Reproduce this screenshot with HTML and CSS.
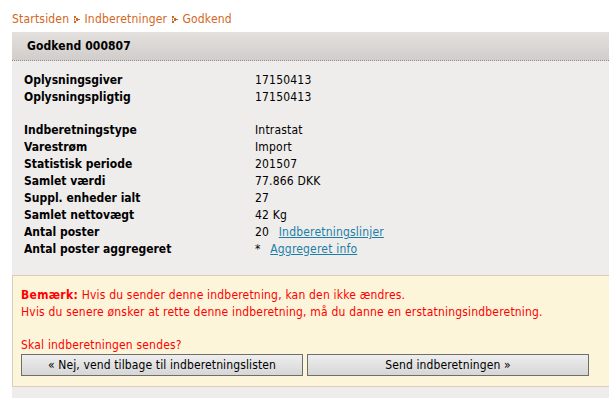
FILE: index.html
```html
<!DOCTYPE html>
<html lang="da">
<head>
    <meta charset="UTF-8">
    <title>Godkend 000807</title>
    <link rel="stylesheet" href="styles.css">
</head>
<body>
<div class="crumbs">
    <a href="#">Startsiden</a>
    <svg class="sep" width="6" height="7" viewBox="0 0 6 7"><rect x="0" y="0" width="2" height="2"/><rect x="0" y="5" width="2" height="2"/><rect x="2" y="2" width="2" height="3"/><rect x="4" y="3" width="2" height="1"/><rect x="0" y="2.5" width="1" height="2"/></svg>
    <a href="#">Indberetninger</a>
    <svg class="sep" width="6" height="7" viewBox="0 0 6 7"><rect x="0" y="0" width="2" height="2"/><rect x="0" y="5" width="2" height="2"/><rect x="2" y="2" width="2" height="3"/><rect x="4" y="3" width="2" height="1"/><rect x="0" y="2.5" width="1" height="2"/></svg>
    <a href="#">Godkend</a>
</div>

<div class="panel">
    <div class="panel-head">Godkend 000807</div>
    <div class="panel-body">
        <dl class="facts">
            <dt>Oplysningsgiver</dt><dd>17150413</dd>
            <dt>Oplysningspligtig</dt><dd>17150413</dd>
            <dt class="gap"></dt><dd class="gap"></dd>
            <dt>Indberetningstype</dt><dd>Intrastat</dd>
            <dt>Varestrøm</dt><dd>Import</dd>
            <dt>Statistisk periode</dt><dd>201507</dd>
            <dt>Samlet værdi</dt><dd>77.866 DKK</dd>
            <dt>Suppl. enheder ialt</dt><dd>27</dd>
            <dt>Samlet nettovægt</dt><dd>42 Kg</dd>
            <dt>Antal poster</dt><dd>20 <a href="#" class="lnk">Indberetningslinjer</a></dd>
            <dt>Antal poster aggregeret</dt><dd>* <a href="#" class="lnk">Aggregeret info</a></dd>
        </dl>

        <div class="notice">
            <p><b>Bemærk:</b> Hvis du sender denne indberetning, kan den ikke ændres.<br>
            Hvis du senere ønsker at rette denne indberetning, må du danne en erstatningsindberetning.</p>
            <p class="ask">Skal indberetningen sendes?</p>
            <div class="btns">
                <button class="btn back">« Nej, vend tilbage til indberetningslisten</button>
                <button class="btn send">Send indberetningen »</button>
            </div>
        </div>
    </div>
</div>
</body>
</html>
```

FILE: styles.css
```css
*{
    margin: 0;
    padding: 0;
}

html, body{
    overflow: hidden;
}

body{
    background: #ffffff;
    font-family: "DejaVu Sans Condensed", "DejaVu Sans", sans-serif;
    font-size: 12px;
    letter-spacing: 0.19px;
    color: #000000;
    padding-left: 12px;
}

.crumbs{
    height: 32px;
    line-height: 39px;
    color: #d4661c;
}
.crumbs a{
    color: #d4661c;
    text-decoration: none;
}
.crumbs .sep{
    fill: #d4661c;
    margin: 0 1px;
    vertical-align: 0;
}

.panel{
    margin-right: -20px;
    background: #efedeb;
    padding-bottom: 11px;
}
.panel-head{
    height: 28px;
    line-height: 28px;
    padding-left: 15px;
    font-size: 12px;
    font-weight: bold;
    letter-spacing: 0.1px;
    background: linear-gradient(#e3e0dd, #d1cdca);
    border-bottom: 1px dotted #8a8a8a;
}
.panel-body{
    padding-top: 11px;
}

.facts{
    display: grid;
    grid-template-columns: 231px 1fr;
    padding-left: 12px;
    line-height: 17px;
}
.facts dt{
    font-weight: bold;
    letter-spacing: 0;
}
.facts .gap{
    height: 16px;
}
.lnk{
    color: #1a7fa8;
    margin-left: 6px;
}

.notice{
    margin-top: 17px;
    background: #fdf5da;
    border: 1px solid #dcccbf;
    border-right: none;
    color: #ff0000;
    padding: 11px 0 10px 8px;
    line-height: 17px;
}
.notice b{
    letter-spacing: 0.3px;
}
.notice .ask{
    margin-top: 16px;
}
.btns{
    display: flex;
    gap: 4px;
}
.btn{
    width: 282px;
    height: 22px;
    font-family: "DejaVu Sans Condensed", "DejaVu Sans", sans-serif;
    font-size: 12px;
    letter-spacing: 0.12px;
    color: #000000;
    background: linear-gradient(#eeeeee, #d6d6d6);
    border: 1px solid #6e6e6e;
}
```
